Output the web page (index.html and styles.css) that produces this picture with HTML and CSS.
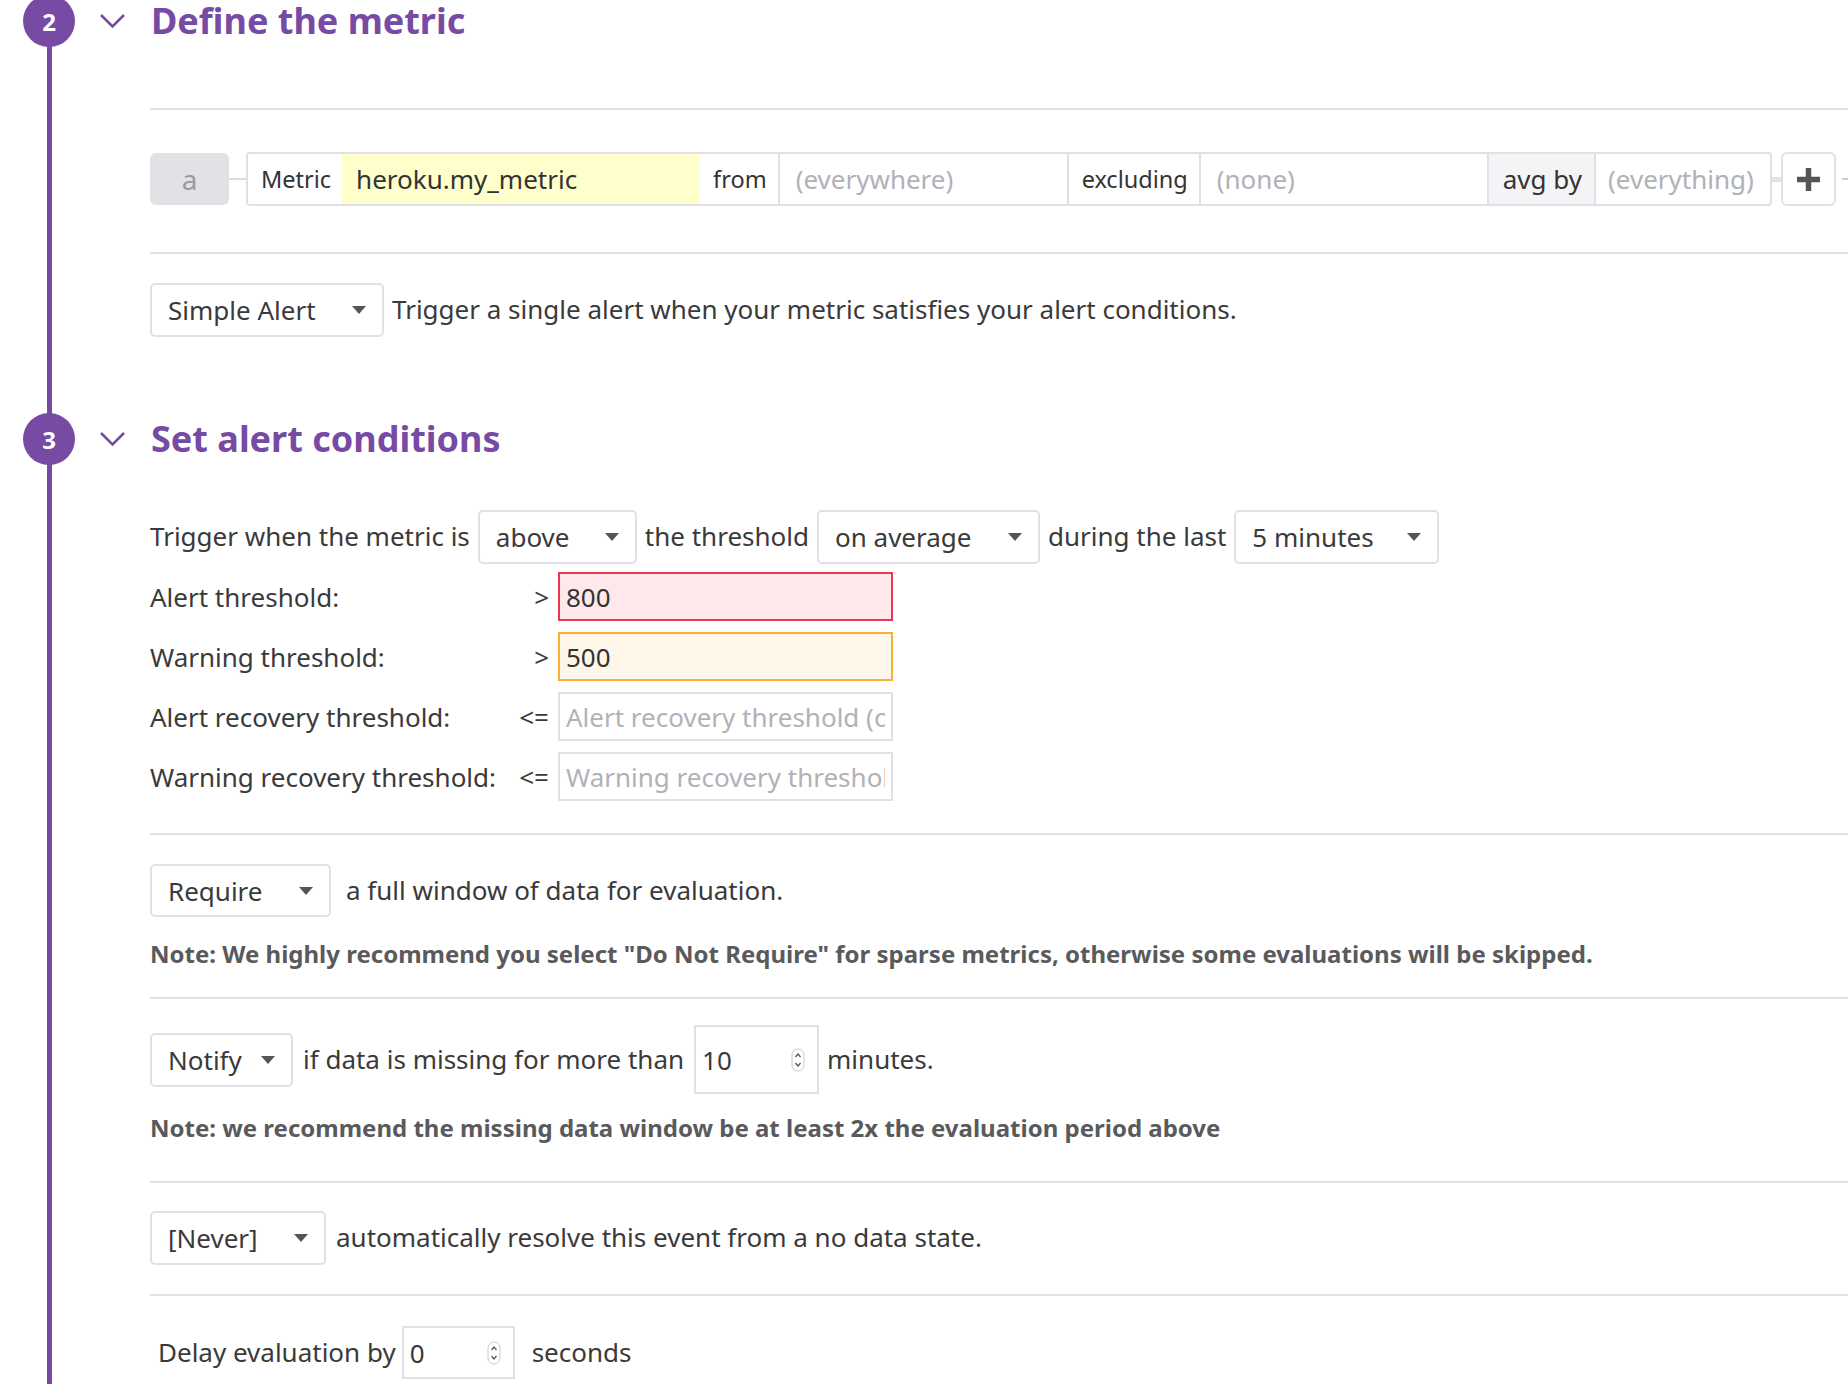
FILE: index.html
```html
<!DOCTYPE html>
<html lang="en">
<head>
<meta charset="utf-8">
<title>Monitor</title>
<link rel="stylesheet" href="styles.css">
</head>
<body>
<div class="timeline">
  <section class="step step-metric">
    <div class="step-head">
      <span class="step-num">2</span>
      <svg class="chev" width="27" height="16" viewBox="0 0 27 16"><polyline points="2,2 13.5,13.5 25,2" fill="none" stroke="#774aa4" stroke-width="2.6"/></svg>
      <h2 class="step-title">Define the metric</h2>
    </div>
    <div class="step-body">
      <hr class="divider div-a">
      <div class="metric-row">
        <div class="query-letter">a</div>
        <span class="link-line"></span>
        <div class="query">
          <span class="q-label">Metric</span>
          <span class="q-value q-metric">heroku.my_metric</span>
          <span class="q-label">from</span>
          <span class="q-value q-ph q-from">(everywhere)</span>
          <span class="q-label">excluding</span>
          <span class="q-value q-ph q-none">(none)</span>
          <span class="q-label q-avg">avg by</span>
          <span class="q-value q-ph q-every">(everything)</span>
        </div>
        <span class="link-thick"></span>
        <div class="plus-btn">
          <svg width="25" height="25" viewBox="0 0 25 25"><path d="M12.5 1v23M1 12.5h23" stroke="#555" stroke-width="5.5"/></svg>
        </div>
        <span class="link-tail"></span>
      </div>
      <hr class="divider div-b">
      <div class="line-row row-simple">
        <div class="select w-simple"><span>Simple Alert</span><svg class="caret" width="14" height="8" viewBox="0 0 14 8"><path d="M0 0h14L7 8z" fill="#555"/></svg></div>
        <span class="txt">Trigger a single alert when your metric satisfies your alert conditions.</span>
      </div>
    </div>
  </section>

  <section class="step step-cond">
    <div class="step-head">
      <span class="step-num">3</span>
      <svg class="chev" width="27" height="16" viewBox="0 0 27 16"><polyline points="2,2 13.5,13.5 25,2" fill="none" stroke="#774aa4" stroke-width="2.6"/></svg>
      <h2 class="step-title">Set alert conditions</h2>
    </div>
    <div class="step-body">
      <div class="line-row row-trigger">
        <span class="txt">Trigger when the metric is</span>
        <div class="select w-above"><span>above</span><svg class="caret" width="14" height="8" viewBox="0 0 14 8"><path d="M0 0h14L7 8z" fill="#555"/></svg></div>
        <span class="txt">the threshold</span>
        <div class="select w-avg"><span>on average</span><svg class="caret" width="14" height="8" viewBox="0 0 14 8"><path d="M0 0h14L7 8z" fill="#555"/></svg></div>
        <span class="txt">during the last</span>
        <div class="select w-5min"><span>5 minutes</span><svg class="caret" width="14" height="8" viewBox="0 0 14 8"><path d="M0 0h14L7 8z" fill="#555"/></svg></div>
      </div>

      <div class="thresholds">
        <label class="th-label" for="th1">Alert threshold:</label>
        <span class="th-op">&gt;</span>
        <input id="th1" class="th-input th-alert" type="text" value="800">

        <label class="th-label" for="th2">Warning threshold:</label>
        <span class="th-op">&gt;</span>
        <input id="th2" class="th-input th-warn" type="text" value="500">

        <label class="th-label" for="th3">Alert recovery threshold:</label>
        <span class="th-op">&lt;=</span>
        <input id="th3" class="th-input th-empty" type="text" placeholder="Alert recovery threshold (optional)">

        <label class="th-label" for="th4">Warning recovery threshold:</label>
        <span class="th-op">&lt;=</span>
        <input id="th4" class="th-input th-empty" type="text" placeholder="Warning recovery threshold (optional)">
      </div>

      <hr class="divider div-c">
      <div class="line-row row-require">
        <div class="select w-require"><span>Require</span><svg class="caret" width="14" height="8" viewBox="0 0 14 8"><path d="M0 0h14L7 8z" fill="#555"/></svg></div>
        <span class="txt">a full window of data for evaluation.</span>
      </div>
      <p class="note note-1">Note: We highly recommend you select "Do Not Require" for sparse metrics, otherwise some evaluations will be skipped.</p>

      <hr class="divider div-d">
      <div class="line-row row-notify">
        <div class="select w-notify"><span>Notify</span><svg class="caret" width="14" height="8" viewBox="0 0 14 8"><path d="M0 0h14L7 8z" fill="#555"/></svg></div>
        <span class="txt">if data is missing for more than</span>
        <div class="num-input num-tall"><span>10</span><svg class="spin" width="14" height="24" viewBox="0 0 14 24"><rect x="1" y="1" width="12" height="22" rx="6" fill="#fff" stroke="#c9c9cf"/><path d="M4.5 9l2.5-3 2.5 3M4.5 15l2.5 3 2.5-3" fill="none" stroke="#555" stroke-width="1.2"/></svg></div>
        <span class="txt">minutes.</span>
      </div>
      <p class="note note-2">Note: we recommend the missing data window be at least 2x the evaluation period above</p>

      <hr class="divider div-e">
      <div class="line-row row-never">
        <div class="select w-never"><span>[Never]</span><svg class="caret" width="14" height="8" viewBox="0 0 14 8"><path d="M0 0h14L7 8z" fill="#555"/></svg></div>
        <span class="txt">automatically resolve this event from a no data state.</span>
      </div>

      <hr class="divider div-f">
      <div class="line-row row-delay">
        <span class="txt">Delay evaluation by</span>
        <div class="num-input num-delay"><span>0</span><svg class="spin" width="14" height="24" viewBox="0 0 14 24"><rect x="1" y="1" width="12" height="22" rx="6" fill="#fff" stroke="#c9c9cf"/><path d="M4.5 9l2.5-3 2.5 3M4.5 15l2.5 3 2.5-3" fill="none" stroke="#555" stroke-width="1.2"/></svg></div>
        <span class="txt">seconds</span>
      </div>
    </div>
  </section>
</div>
</body>
</html>
```

FILE: styles.css
```css
* { box-sizing: border-box; }

html, body {
  margin: 0;
  padding: 0;
  background: #fff;
  overflow: hidden;
}

body {
  font-family: "Noto Sans", "Open Sans", sans-serif;
  color: #3a3a3a;
  font-size: 26px;
  width: 1848px;
  height: 1384px;
}

.timeline {
  margin-left: 47px;
  border-left: 5px solid #774aa4;
  padding-bottom: 40px;
}

.step-head {
  display: flex;
  align-items: center;
  margin-left: -29px;
  height: 52px;
}

.step-metric .step-head { margin-top: -5px; }
.step-cond .step-head { margin-top: 76px; }

.step-num {
  width: 52px;
  height: 52px;
  border-radius: 50%;
  background: #774aa4;
  color: #fff;
  font-weight: 700;
  font-size: 24px;
  display: flex;
  align-items: center;
  justify-content: center;
  flex: none;
}

.chev {
  margin-left: 24px;
  flex: none;
}

.step-title {
  margin: 0 0 0 25px;
  font-size: 36px;
  font-weight: 700;
  color: #774aa4;
  line-height: 1;
}

.step-body {
  padding-left: 98px;
}

.divider {
  border: 0;
  height: 2px;
  background: #e1e0e6;
  margin: 0;
}

.div-a { margin-top: 61px; }
.div-b { margin-top: 45px; }
.div-c { margin-top: 32px; }
.div-d { margin-top: 28px; }
.div-e { margin-top: 38px; }
.div-f { margin-top: 29px; }

/* metric query row */
.metric-row {
  display: flex;
  align-items: center;
  height: 56px;
  margin-top: 41px;
}

.query-letter {
  width: 79px;
  height: 52px;
  border-radius: 6px;
  background: #e2e1e6;
  color: #9a9a9e;
  display: flex;
  align-items: center;
  justify-content: center;
  font-size: 28px;
  flex: none;
}

.link-line {
  width: 17px;
  height: 2px;
  background: #dcdbe1;
  flex: none;
}

.query {
  display: flex;
  height: 54px;
  border: 2px solid #e1e0e6;
  border-radius: 4px;
  flex: none;
}

.query > span {
  display: flex;
  align-items: center;
  height: 100%;
}

.q-label {
  font-size: 23.5px;
  color: #333;
  padding: 0 11px 0 13px;
}

.q-value {
  font-size: 26px;
  padding: 0 12px;
  border-left: 2px solid #e1e0e6;
  border-right: 2px solid #e1e0e6;
}

.q-metric {
  background: #ffffcc;
  width: 358px;
  border-color: #ffffcc;
  color: #333;
}

.q-ph { color: #b1b1b8; }
.q-from { width: 291px; padding-left: 16px; }
.q-none { width: 290px; padding-left: 16px; }
.q-every { width: 176px; padding-left: 12px; border-right: 0; }

.q-avg {
  background: #f4f4f6;
  font-size: 26px !important;
  padding: 0 12px 0 14px !important;
}

.link-thick {
  width: 9px;
  height: 5px;
  background: #e1e0e6;
  flex: none;
}

.plus-btn {
  width: 55px;
  height: 54px;
  border: 2px solid #e1e0e6;
  border-radius: 6px;
  display: flex;
  align-items: center;
  justify-content: center;
  flex: none;
}

.link-tail {
  width: 10px;
  height: 2px;
  margin-left: 6px;
  background: #c9c9cf;
  flex: none;
}

/* generic rows */
.line-row {
  display: flex;
  align-items: center;
  gap: 8px;
  white-space: nowrap;
}

.txt { line-height: 1.2; }

.select {
  height: 54px;
  border: 2px solid #e1e0e6;
  border-radius: 5px;
  display: flex;
  align-items: center;
  padding: 0 16px;
  background: #fff;
  flex: none;
}

.select .caret { margin-left: auto; }

.w-simple { width: 234px; }
.w-above { width: 159px; }
.w-avg { width: 223px; }
.w-5min { width: 205px; }
.w-require { width: 181px; }
.w-notify { width: 143px; }
.w-never { width: 176px; }

.row-simple { margin-top: 29px; }
.row-trigger { margin-top: 45px; }

.thresholds {
  display: grid;
  grid-template-columns: 352px 38px 335px;
  column-gap: 9px;
  row-gap: 11px;
  margin-top: 8px;
  align-items: center;
}

.th-op { text-align: right; }

.th-input {
  height: 49px;
  width: 335px;
  border: 2px solid #e1e0e6;
  border-radius: 0;
  padding: 0 6px;
  margin: 0;
  font-family: inherit;
  font-size: 26px;
  color: #333;
  background: #fff;
  outline: none;
}

.th-input::placeholder { color: #b1b1b8; opacity: 1; }

.th-alert { border-color: #e8384f; background: #ffe8eb; }
.th-warn { border-color: #f7b035; background: #fff6ea; }

.row-require { margin-top: 29px; gap: 15px; }
.row-require .select { height: 53px; }

.note {
  margin: 0;
  font-size: 24px;
  font-weight: 700;
  color: #5a5a5c;
  line-height: 30px;
  white-space: nowrap;
}

.note-1 { margin-top: 22px; }
.note-2 { margin-top: 19px; }

.row-notify { margin-top: 26px; gap: 10px; }
.row-notify .num-input + .txt { margin-left: -2px; }

.num-input {
  border: 2px solid #e1e0e6;
  display: flex;
  align-items: center;
  padding: 0 12px 0 6px;
  flex: none;
}

.num-input .spin { margin-left: auto; }

.num-tall { width: 125px; height: 69px; }

.row-never { margin-top: 28px; gap: 10px; }

.row-delay { margin-top: 30px; padding-left: 8px; gap: 6px; }
.num-delay { width: 113px; height: 53px; padding-right: 12px; }
.row-delay .num-delay + .txt { margin-left: 11px; }
```
